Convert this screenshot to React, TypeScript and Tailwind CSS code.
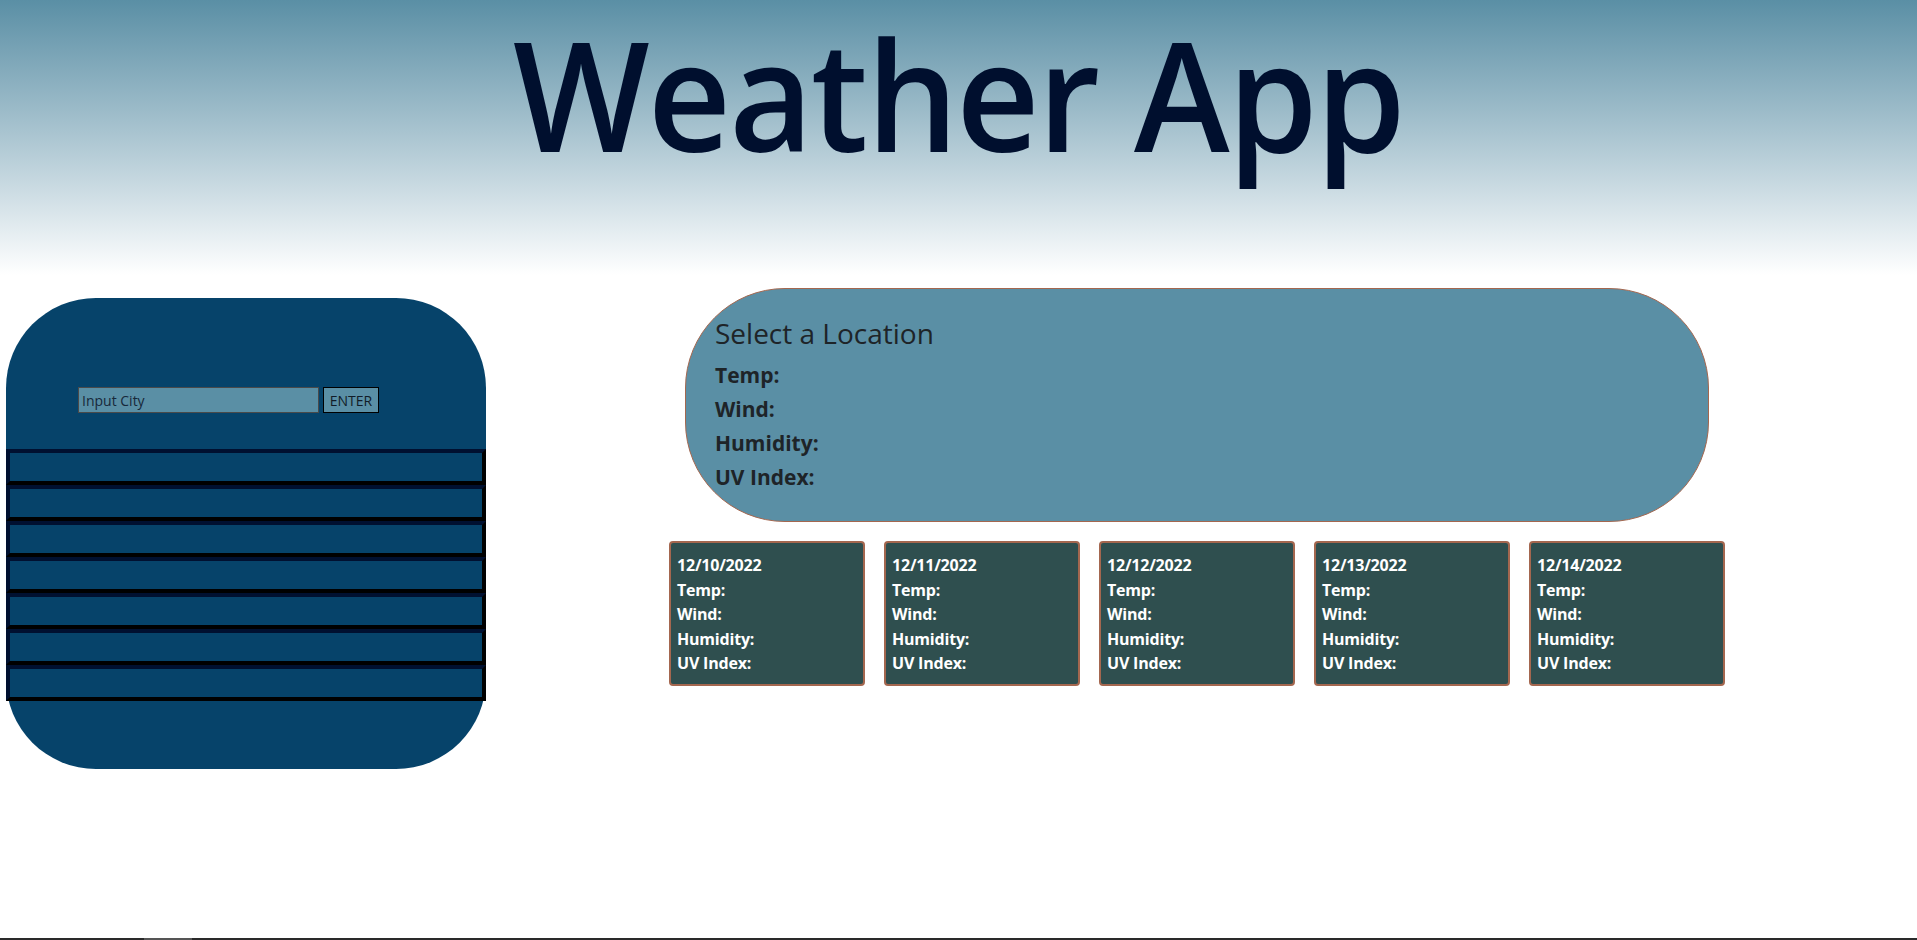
import React from 'react';

const forecast = ['12/10/2022', '12/11/2022', '12/12/2022', '12/13/2022', '12/14/2022'];
const stats = ['Temp:', 'Wind:', 'Humidity:', 'UV Index:'];

function SearchPanel() {
  return (
    <aside className="ml-[6px] mt-[23px] flex h-[471px] w-[480px] shrink-0 flex-col rounded-[90px] bg-[#06436a]">
      <div className="flex gap-[4px] pl-[72px] pt-[89px]">
        <input
          type="text"
          placeholder="Input City"
          className="box-border h-[26px] w-[241px] border border-[#4a4a4a] bg-[#5a8fa5] px-[3px] text-[14px] text-[#111c28] outline-none placeholder:text-[#17283a]"
        />
        <button className="box-border h-[26px] w-[56px] border border-black bg-[#5a8fa5] text-[14px] text-[#111c28]">
          ENTER
        </button>
      </div>
      {/* saved cities */}
      <ul className="mt-[36px] flex flex-col">
        {[0, 1, 2, 3, 4, 5, 6].map((i) => (
          <li
            key={i}
            className="box-border h-[36px] border-[4px] border-t-[#001030] border-l-[#001030] border-b-black border-r-black bg-[#06436a]"
          />
        ))}
      </ul>
    </aside>
  );
}

function Today() {
  return (
    <section className="box-border h-[234px] w-[1024px] rounded-[100px] border border-[#a4674f] bg-[#5a8fa5] pl-[29px] pt-[27px] text-[#1e2428]">
      <h2 className="mb-[8px] text-[28px] leading-[34px]">Select a Location</h2>
      {stats.map((s) => (
        <p key={s} className="text-[21px] font-bold leading-[34px]">
          {s}
        </p>
      ))}
    </section>
  );
}

function ForecastCard({ date }: { date: string }) {
  return (
    <div className="box-border h-[145px] w-[196px] rounded-[4px] border-2 border-[#a4674f] bg-[#2f4f4f] px-[6px] pt-[10px] text-[16px] font-bold leading-[24.5px] tracking-[-0.2px] text-white">
      <p>{date}</p>
      {stats.map((s) => (
        <p key={s}>{s}</p>
      ))}
    </div>
  );
}

export default function App() {
  return (
    <div className="flex h-[940px] flex-col bg-white font-['Open_Sans',sans-serif]">
      <header className="flex h-[275px] shrink-0 justify-center bg-linear-to-b from-[#5a8fa5] to-white pt-[1px]">
        <h1 className="scale-x-[0.945] self-start px-[8px] text-[153px] font-semibold leading-[1.2] tracking-[-2px] text-[#000f2e]">
          Weather App
        </h1>
      </header>
      <div className="flex flex-1">
        <SearchPanel />
        <main className="flex flex-1 flex-col items-center pr-[9px] pt-[13px]">
          <Today />
          <div className="mt-[19px] flex gap-[19px]">
            {forecast.map((d) => (
              <ForecastCard key={d} date={d} />
            ))}
          </div>
        </main>
      </div>
      <div className="flex h-[2px] shrink-0 bg-[#2a2a2a]">
        <div className="ml-[144px] w-[48px] bg-[#555555]" />
      </div>
    </div>
  );
}
